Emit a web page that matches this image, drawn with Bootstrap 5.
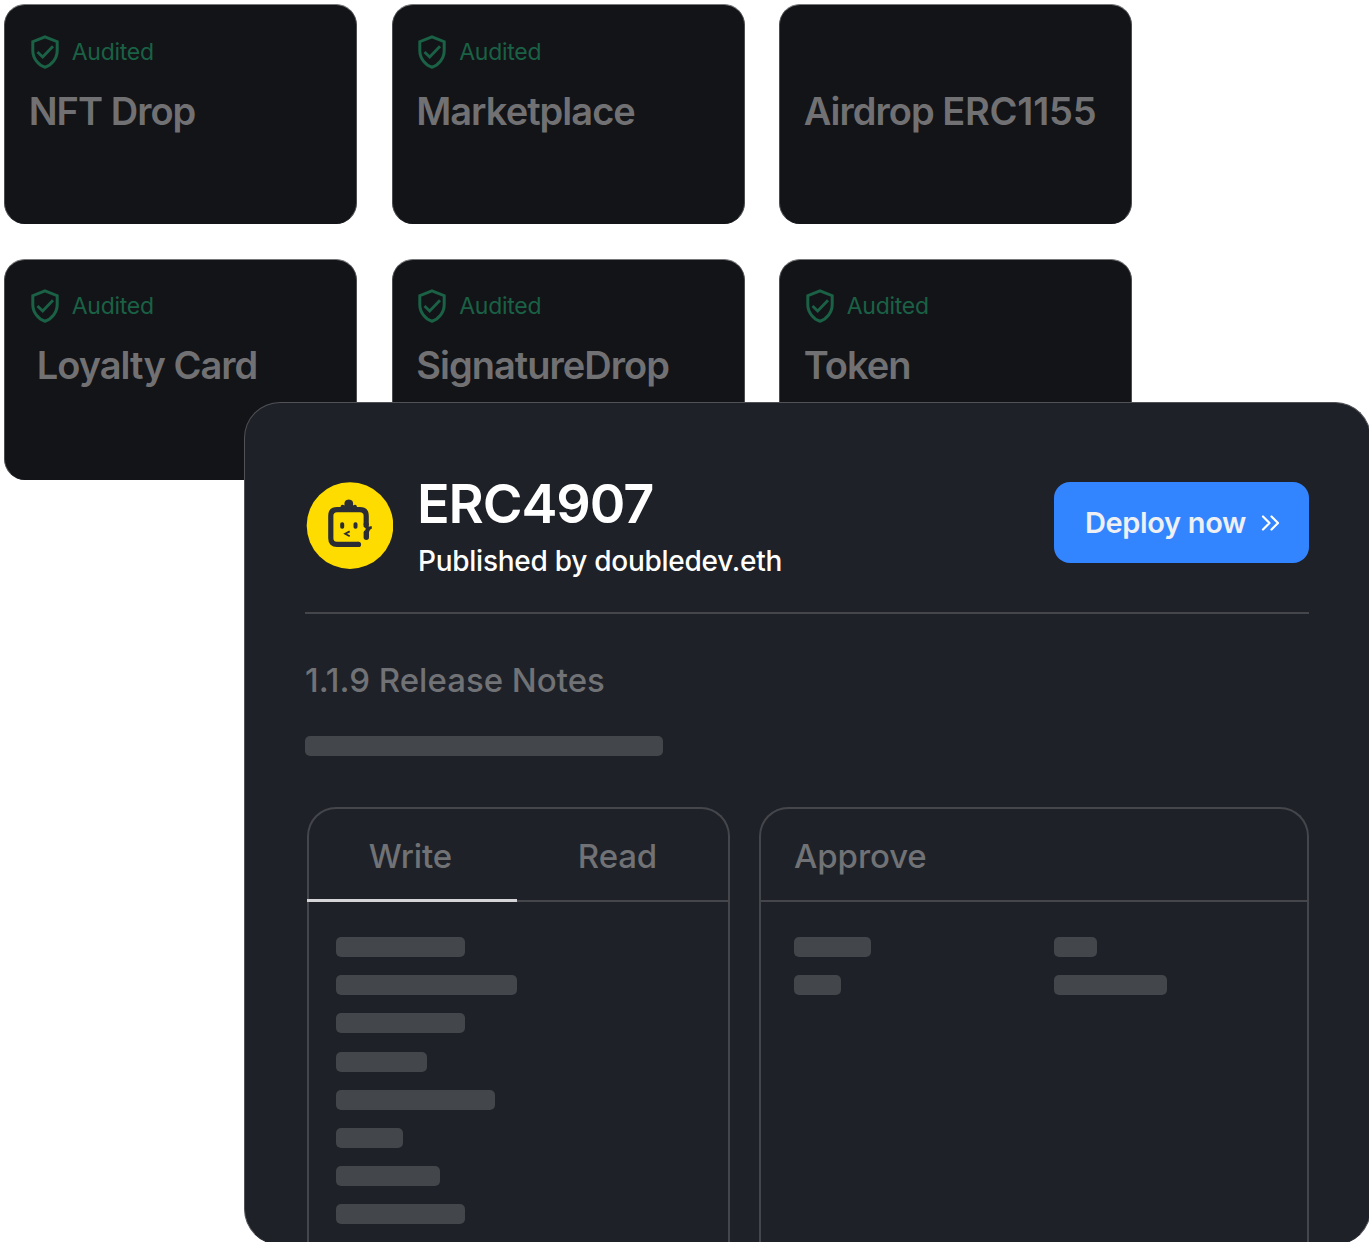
<!DOCTYPE html>
<html lang="en">
<head>
<meta charset="utf-8">
<meta name="viewport" content="width=device-width, initial-scale=1">
<title>Contract publishing</title>
<link href="https://cdn.jsdelivr.net/npm/bootstrap@5.3.0/dist/css/bootstrap.min.css" rel="stylesheet">
<style>
  body { font-family: Inter, "Liberation Sans", sans-serif; background: #fff; }
  .stage { width: 1369px; height: 1242px; }
  .contracts { display: grid; grid-template-columns: repeat(3, 353px); grid-template-rows: 220.4px 221px; gap: 34.6px 34.5px; padding: 4px 0 0 4px; }
  .contract { background: #131418; border: 1px solid #131418; border-color: #77787a #4c4d50 #131418; border-radius: 21px; padding: 28.5px 25px 0 23.7px; }
  .audit { height: 36px; gap: 12px; color: #1a6145; font-size: 23px; line-height: 34px; letter-spacing: -.25px; }
  .audit svg { width: 29px; height: 34px; margin-left: 2px; }
  .contract-name { color: #717173; font-size: 38px; font-weight: 600; line-height: 46px; margin: 18px 0 0; white-space: nowrap; letter-spacing: -.97px; }
  .contract-name .standard { letter-spacing: -.25px; }
  .publish { left: 244px; top: 402px; width: 1127px; height: 843px; background: #1e2128; border: 1.5px solid #505257; border-bottom-color: #1e2128; border-radius: 36px; padding: 79px 61px 0 60px; }
  .avatar { width: 88px; height: 88px; margin: 0 25px 0 0; }
  .publish-head { height: 132px; border-bottom: 2px solid #44464b; }
  .publish-title { color: #fff; font-size: 54px; font-weight: 600; line-height: 60px; margin: -8px 0 0 -1px; letter-spacing: -1.1px; }
  .publish-by { color: #fff; font-size: 28px; font-weight: 500; line-height: 36px; margin-top: 9px; letter-spacing: -.27px; }
  .btn.deploy { width: 255px; height: 81px; border-radius: 16px; background: #3385ff; color: #eef0f3; font-size: 29px; font-weight: 600; padding: 0 0 0 2px; gap: 15px; letter-spacing: -.35px; }
  .notes { color: #717275; font-size: 33px; font-weight: 500; line-height: 40px; margin: 46px 0 36px; }
  .bar { height: 20px; border-radius: 5px; background: #43464a; }
  .panes { gap: 29px; margin: 51px 0 0 1.5px; }
  .pane { height: 450px; border: 2px solid #44464b; border-bottom: 0; border-radius: 29px 29px 0 0; }
  .pane-write { width: 423px; }
  .pane-approve { width: 550px; }
  .pane-head { height: 93px; margin: 0 -2px; border-bottom: 2px solid #44464b; color: #717275; font-size: 33px; font-weight: 500; letter-spacing: -.1px; }
  .pane-tab { width: 210px; height: 93px; line-height: 95px; text-align: center; padding-right: 8px; }
  .pane-tab.current { border-bottom: 3px solid #d5d5d7; padding-right: 2px; }
  .pane-title { line-height: 95px; padding-left: 35.5px; }
  .bars { display: flex; flex-direction: column; gap: 18.2px; padding: 35px 0 0 27px; }
  .approve-bars { display: grid; grid-template-columns: 260.5px 1fr; row-gap: 18.2px; padding: 35px 0 0 33px; }
</style>
</head>
<body>
<svg class="d-none" aria-hidden="true">
  <symbol id="shield" viewBox="0 0 29 34">
    <path d="M14 1.8 26.2 6.7V15.5C26.2 23.5 20.5 30.3 14 32.2 7.5 30.3 1.8 23.5 1.8 15.5V6.7Z" fill="none" stroke="currentColor" stroke-width="3"/>
    <path d="M6.5 17 11.7 22 22 11.3" fill="none" stroke="currentColor" stroke-width="2.8"/>
  </symbol>
</svg>
<main class="stage position-relative overflow-hidden">
  <section class="contracts">
    <article class="contract"><div class="audit d-flex align-items-center"><svg><use href="#shield"/></svg><span>Audited</span></div><h2 class="contract-name">NFT Drop</h2></article>
    <article class="contract"><div class="audit d-flex align-items-center"><svg><use href="#shield"/></svg><span>Audited</span></div><h2 class="contract-name">Marketplace</h2></article>
    <article class="contract"><div class="audit"></div><h2 class="contract-name">Airdrop <span class="standard">ERC1155</span></h2></article>
    <article class="contract"><div class="audit d-flex align-items-center"><svg><use href="#shield"/></svg><span>Audited</span></div><h2 class="contract-name ps-2">Loyalty Card</h2></article>
    <article class="contract"><div class="audit d-flex align-items-center"><svg><use href="#shield"/></svg><span>Audited</span></div><h2 class="contract-name">SignatureDrop</h2></article>
    <article class="contract"><div class="audit d-flex align-items-center"><svg><use href="#shield"/></svg><span>Audited</span></div><h2 class="contract-name">Token</h2></article>
  </section>

  <section class="publish position-absolute">
    <header class="publish-head d-flex align-items-start">
      <svg class="avatar flex-shrink-0" viewBox="0 0 88 88">
        <circle cx="45" cy="43.6" r="43.3" fill="#ffdc00"/>
        <g transform="translate(0 -.8)">
        <path d="M53.5 63.2H32Q25.8 63.2 25.8 57V34.6Q25.8 28.4 32 28.4H55Q61.2 28.4 61.2 34.600V44" fill="none" stroke="#2a2d34" stroke-width="5.2"/>
        <circle cx="53.5" cy="63.2" r="2.6" fill="#2a2d34"/>
        <path d="M35.5 27.500Q35.2 23.5 37.5 23.5 38.8 23.5 39.5 24.2 38.6 18.2 43.8 18.2 49 18.2 48 24.2 48.8 23.5 50 23.5 52.3 23.5 52 27.500Z" fill="#2a2d34"/>
        <path d="M58.6 42H63.8V45.600L66.6 44.8 66.9 47.2 65 48.6 64 50.8V56A2.7 2.7 0 0 1 58.600 56V51Q58.8 49.4 60.2 49L60.800 47.2 58.600 45.500Z" fill="#2a2d34"/>
        <rect x="35.2" y="41" width="4" height="6.5" rx="1.8" fill="#2a2d34"/>
        <rect x="48.5" y="41" width="4" height="6.5" rx="1.8" fill="#2a2d34"/>
        <path d="M44.700 50.200 40.200 52.600 44.700 55" fill="none" stroke="#2a2d34" stroke-width="1.8"/>
        </g>
      </svg>
      <div>
        <h1 class="publish-title">ERC4907</h1>
        <div class="publish-by">Published by doubledev.eth</div>
      </div>
      <button class="btn deploy ms-auto d-flex align-items-center justify-content-center" type="button">
        <span>Deploy now</span>
        <svg width="19" height="16" viewBox="0 0 19 16" fill="none" stroke="#fff" stroke-width="2.2" stroke-linecap="round" stroke-linejoin="round"><path d="M2 1.5 8.5 8 2 14.5M10.5 1.5 17 8 10.5 14.5"/></svg>
      </button>
    </header>
    <h3 class="notes">1.1.9 Release Notes</h3>
    <div class="bar" style="width:358px"></div>
    <div class="panes d-flex">
      <div class="pane pane-write flex-shrink-0">
        <div class="pane-head d-flex"><div class="pane-tab current">Write</div><div class="pane-tab">Read</div></div>
        <div class="bars">
          <div class="bar" style="width:129px"></div>
          <div class="bar" style="width:181px"></div>
          <div class="bar" style="width:129px"></div>
          <div class="bar" style="width:91px"></div>
          <div class="bar" style="width:159px"></div>
          <div class="bar" style="width:67px"></div>
          <div class="bar" style="width:104px"></div>
          <div class="bar" style="width:129px"></div>
        </div>
      </div>
      <div class="pane pane-approve flex-shrink-0">
        <div class="pane-head"><div class="pane-title">Approve</div></div>
        <div class="approve-bars">
          <div class="bar" style="width:77px"></div>
          <div class="bar" style="width:43px"></div>
          <div class="bar" style="width:47px"></div>
          <div class="bar" style="width:113px"></div>
        </div>
      </div>
    </div>
  </section>
</main>
<script src="https://cdn.jsdelivr.net/npm/bootstrap@5.3.0/dist/js/bootstrap.bundle.min.js"></script>
</body>
</html>
